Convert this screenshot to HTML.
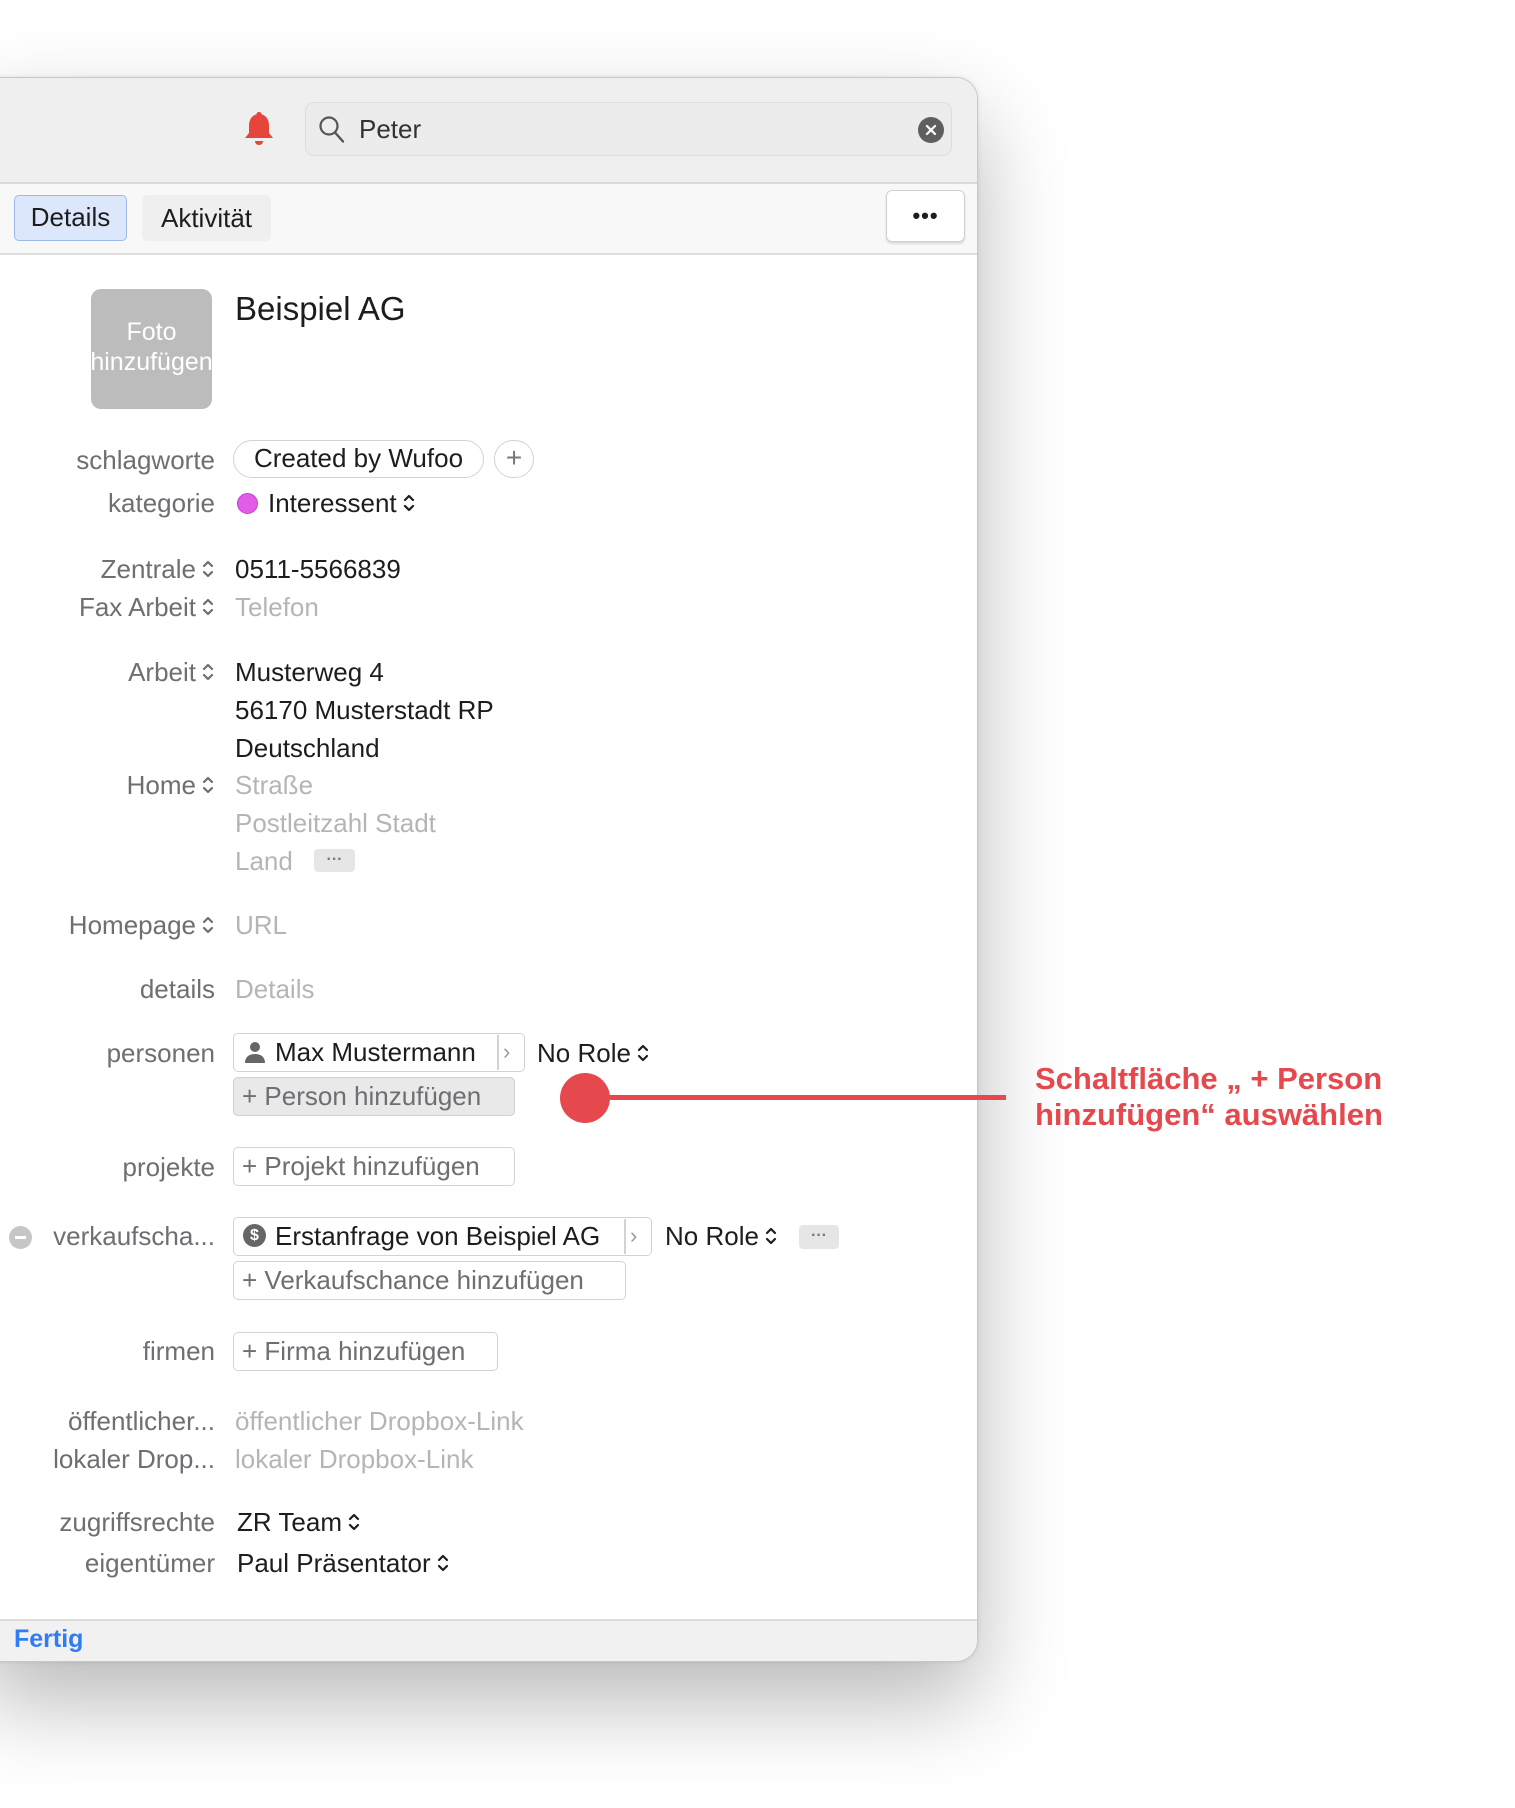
<!DOCTYPE html>
<html><head><meta charset="utf-8"><style>
*{margin:0;padding:0;box-sizing:border-box}
body{width:1515px;height:1808px;background:#fff;position:relative;overflow:hidden;font-family:"Liberation Sans","DejaVu Sans",sans-serif;font-size:26px;color:#1d1d1f}
.win{position:absolute;left:-20px;top:77px;width:998px;height:1585px;background:#fff;border-radius:0 22px 22px 0;border:1px solid #c8c8c8;box-shadow:0 40px 90px rgba(0,0,0,.28),0 0 4px rgba(0,0,0,.1);overflow:hidden}
.a{position:absolute;white-space:nowrap}
.lbl{position:absolute;right:1300px;color:#6e6e73;text-align:right;white-space:nowrap;line-height:30px}
.v{position:absolute;left:235px;line-height:30px;white-space:nowrap}
.ph{color:#b5b5b8}
.btn{position:absolute;border:1.5px solid #d3d3d3;border-radius:5px;height:39px;line-height:36px;padding-left:8px;color:#6e6e73;background:#fff;white-space:nowrap}
.ud{display:inline-block;width:14px;height:22px;margin-left:5px;vertical-align:-2px}
</style></head><body>
<svg width="0" height="0" style="position:absolute"><defs><symbol id="ud" viewBox="0 0 14 22"><path d="M3 8l4-4 4 4M3 14l4 4 4-4" fill="none" stroke="currentColor" stroke-width="2.2" stroke-linecap="round" stroke-linejoin="round"/></symbol></defs></svg>
<div class="win">
 <div class="a" style="left:0;top:0;width:998px;height:106px;background:#efefef;border-bottom:2px solid #dadada"></div>
 <div class="a" style="left:0;top:106px;width:998px;height:71px;background:#f8f8f8;border-bottom:2px solid #dedede"></div>
 <div class="a" style="left:0;top:1541px;width:998px;height:44px;background:#f1f1f1;border-top:2px solid #dcdcdc"></div>
</div>
<svg class="a" style="left:243px;top:110px" width="32" height="38" viewBox="0 0 32 38"><path d="M16 2c1.5 0 2.5 1 2.5 2.3C24 6 26 10.5 26 16v7l4 5H2l4-5v-7c0-5.5 2-10 7.5-11.7C13.5 3 14.5 2 16 2z" fill="#e5453a"/><path d="M12 31h8c0 2.5-1.8 4-4 4s-4-1.5-4-4z" fill="#e5453a"/></svg>
<div class="a" style="left:305px;top:102px;width:647px;height:54px;border:1.5px solid #dedede;border-radius:9px;background:#ececec"></div>
<svg class="a" style="left:318px;top:115px" width="28" height="30" viewBox="0 0 28 30"><circle cx="11" cy="11" r="8.5" fill="none" stroke="#555" stroke-width="2.2"/><path d="M17 17.5l8 9" stroke="#555" stroke-width="2.4" stroke-linecap="round"/></svg>
<div class="a" style="left:359px;top:114px;font-size:26px;color:#333;line-height:30px">Peter</div>
<svg class="a" style="left:918px;top:117px" width="26" height="26" viewBox="0 0 26 26"><circle cx="13" cy="13" r="13" fill="#5f5f5f"/><path d="M9 9l8 8M17 9l-8 8" stroke="#fff" stroke-width="2.2" stroke-linecap="round"/></svg>
<div class="a" style="left:14px;top:195px;width:113px;height:46px;background:#dde7fb;border:1.5px solid #9bb9ec;border-radius:5px;line-height:43px;text-align:center;font-size:26px">Details</div>
<div class="a" style="left:142px;top:195px;width:129px;height:46px;background:#efefef;border-radius:5px;line-height:46px;text-align:center;font-size:26px">Aktivität</div>
<div class="a" style="left:886px;top:190px;width:79px;height:52px;background:#fff;border:1.5px solid #d0d0d0;border-radius:6px;box-shadow:0 2px 2px rgba(0,0,0,.12);text-align:center;line-height:50px;font-size:22px;font-weight:bold;letter-spacing:1px">•••</div>
<div class="a" style="left:91px;top:289px;width:121px;height:120px;background:#bcbcbc;border-radius:10px;overflow:hidden;color:#fff;text-align:center;font-size:25px;line-height:30px;padding-top:28px">Foto<br><span style="display:inline-block;margin-left:-20px;margin-right:-20px">hinzufügen</span></div>
<div class="a" style="left:235px;top:289px;font-size:33px;line-height:40px">Beispiel AG</div>

<div class="lbl" style="top:445px">schlagworte</div>
<div class="a" style="left:233px;top:440px;width:251px;height:38px;border:1.5px solid #d3d3d3;border-radius:19px;text-align:center;line-height:35px">Created by Wufoo</div>
<div class="a" style="left:494px;top:440px;width:40px;height:38px;border:1.5px solid #d3d3d3;border-radius:19px;text-align:center;line-height:34px;color:#777;font-size:28px">+</div>
<div class="lbl" style="top:488px">kategorie</div>
<div class="a" style="left:237px;top:493px;width:21px;height:21px;border-radius:50%;background:#e35ce8;border:1px solid #c440c8"></div>
<div class="a" style="left:268px;top:488px;line-height:30px">Interessent<svg class="ud"><use href="#ud"/></svg></div>

<div class="lbl" style="top:554px">Zentrale<svg class="ud"><use href="#ud"/></svg></div><div class="v" style="top:554px">0511-5566839</div>
<div class="lbl" style="top:592px">Fax Arbeit<svg class="ud"><use href="#ud"/></svg></div><div class="v ph" style="top:592px">Telefon</div>

<div class="lbl" style="top:657px">Arbeit<svg class="ud"><use href="#ud"/></svg></div>
<div class="v" style="top:657px">Musterweg 4</div>
<div class="v" style="top:695px">56170 Musterstadt RP</div>
<div class="v" style="top:733px">Deutschland</div>
<div class="lbl" style="top:770px">Home<svg class="ud"><use href="#ud"/></svg></div>
<div class="v ph" style="top:770px">Straße</div>
<div class="v ph" style="top:808px">Postleitzahl Stadt</div>
<div class="v ph" style="top:846px">Land</div>
<div class="a" style="left:314px;top:849px;width:41px;height:23px;background:#e6e6e6;border-radius:4px;text-align:center;line-height:21px;color:#777;font-size:16px;font-weight:bold">···</div>

<div class="lbl" style="top:910px">Homepage<svg class="ud"><use href="#ud"/></svg></div><div class="v ph" style="top:910px">URL</div>
<div class="lbl" style="top:974px">details</div><div class="v ph" style="top:974px">Details</div>

<div class="lbl" style="top:1038px">personen</div>
<div class="btn" style="left:233px;top:1033px;width:292px;color:#1d1d1f;padding-left:41px">Max Mustermann</div>
<svg class="a" style="left:243px;top:1040px" width="24" height="24" viewBox="0 0 24 24"><circle cx="12" cy="7" r="5" fill="#666"/><path d="M2 23c0-6 4-9 10-9s10 3 10 9z" fill="#666"/></svg>
<div class="a" style="left:497px;top:1035px;width:1.5px;height:35px;background:#d3d3d3"></div>
<div class="a" style="left:503px;top:1037px;color:#999;font-size:22px;line-height:30px">›</div>
<div class="a" style="left:537px;top:1038px;line-height:30px">No Role<svg class="ud"><use href="#ud"/></svg></div>
<div class="btn" style="left:233px;top:1077px;width:282px;background:#e9e9e9;border-color:#cfcfcf">+ Person hinzufügen</div>

<div class="lbl" style="top:1152px">projekte</div>
<div class="btn" style="left:233px;top:1147px;width:282px">+ Projekt hinzufügen</div>

<div class="a" style="left:9px;top:1226px;width:23px;height:23px;border-radius:50%;background:#c6c6c6"><div style="position:absolute;left:6px;top:10px;width:11px;height:3px;background:#fff"></div></div>
<div class="lbl" style="top:1221px">verkaufscha...</div>
<div class="btn" style="left:233px;top:1217px;width:419px;color:#1d1d1f;padding-left:41px">Erstanfrage von Beispiel AG</div>
<div class="a" style="left:243px;top:1224px;width:23px;height:23px;border-radius:50%;background:#666;color:#fff;font-size:16px;font-weight:bold;text-align:center;line-height:23px">$</div>
<div class="a" style="left:624px;top:1219px;width:1.5px;height:35px;background:#d3d3d3"></div>
<div class="a" style="left:630px;top:1221px;color:#999;font-size:22px;line-height:30px">›</div>
<div class="a" style="left:665px;top:1221px;line-height:30px">No Role<svg class="ud"><use href="#ud"/></svg></div>
<div class="a" style="left:799px;top:1225px;width:40px;height:24px;background:#e6e6e6;border-radius:4px;text-align:center;line-height:22px;color:#777;font-size:16px;font-weight:bold">···</div>
<div class="btn" style="left:233px;top:1261px;width:393px">+ Verkaufschance hinzufügen</div>

<div class="lbl" style="top:1336px">firmen</div>
<div class="btn" style="left:233px;top:1332px;width:265px">+ Firma hinzufügen</div>

<div class="lbl" style="top:1406px">öffentlicher...</div><div class="v ph" style="top:1406px">öffentlicher Dropbox-Link</div>
<div class="lbl" style="top:1444px">lokaler Drop...</div><div class="v ph" style="top:1444px">lokaler Dropbox-Link</div>

<div class="lbl" style="top:1507px">zugriffsrechte</div><div class="v" style="top:1507px;left:237px">ZR Team<svg class="ud"><use href="#ud"/></svg></div>
<div class="lbl" style="top:1548px">eigentümer</div><div class="v" style="top:1548px;left:237px">Paul Präsentator<svg class="ud"><use href="#ud"/></svg></div>

<div class="a" style="left:14px;top:1624px;color:#2f7cf6;font-weight:bold;font-size:25px;line-height:30px">Fertig</div>

<div class="a" style="left:595px;top:1095px;width:411px;height:5px;background:#e5484d"></div>
<div class="a" style="left:560px;top:1073px;width:50px;height:50px;border-radius:50%;background:#e5484d"></div>
<div class="a" style="left:1035px;top:1061px;color:#e5484d;font-weight:bold;font-size:31px;line-height:36px">Schaltfläche „ + Person<br>hinzufügen“ auswählen</div>
</body></html>
